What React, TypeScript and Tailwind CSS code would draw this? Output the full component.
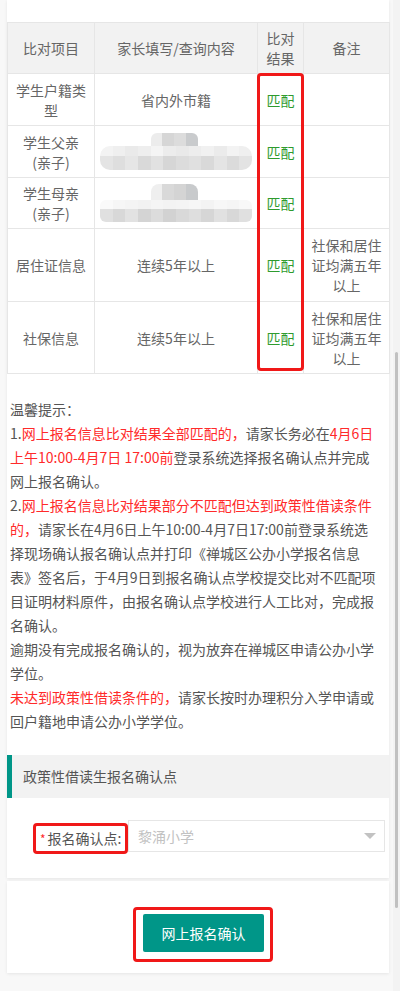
import React from "react";

const red = "text-[#ff2a2a]";

function MosaicRow({ colors, h }: { colors: string[]; h: number }) {
  return (
    <div className="flex w-full" style={{ height: h }}>
      {colors.map((c, i) => (
        <div key={i} className="flex-1" style={{ background: c }} />
      ))}
    </div>
  );
}

function BlurFather() {
  return (
    <div className="flex flex-col items-center blur-[0.7px]">
      <div className="w-[47px] overflow-hidden rounded-t-[6px] ml-[-4px]">
        <MosaicRow h={13} colors={["#ececec", "#d6d6d6", "#dcdcdc", "#c9cbcd"]} />
      </div>
      <div className="w-[152px] overflow-hidden rounded-[10px]">
        <MosaicRow h={10} colors={["#f3f3f3", "#efefef", "#eaeaea", "#eeeeee", "#f4f4f4", "#ececec", "#e9e9e9", "#ededed", "#f1f1f1", "#ebebeb", "#f3f3f3", "#efefef"]} />
        <MosaicRow h={14} colors={["#e4e4e4", "#dedede", "#e6e6e6", "#d9d9d9", "#e1e1e1", "#d6d6d6", "#dcdcdc", "#e0e0e0", "#d9d9d9", "#e4e4e4", "#dbdbdb", "#e3e3e3"]} />
      </div>
    </div>
  );
}

function BlurMother() {
  return (
    <div className="flex flex-col items-center blur-[0.7px]">
      <div className="w-[47px] overflow-hidden rounded-t-[8px] ml-[-4px]">
        <MosaicRow h={16} colors={["#efefef", "#d9d9d9", "#d4d4d4", "#c8cacc"]} />
      </div>
      <div className="w-[152px] overflow-hidden rounded-[6px]">
        <MosaicRow h={9} colors={["#fafafa", "#f6f6f6", "#f4f4f4", "#f2f2f2", "#f5f5f5", "#f3f3f3", "#f4f4f4", "#f6f6f6", "#f3f3f3", "#f7f7f7", "#f5f5f5", "#f8f8f8"]} />
        <MosaicRow h={13} colors={["#e0e0e0", "#d8d8d8", "#e2e2e2", "#d4d4d4", "#dcdcdc", "#d2d2d2", "#d9d9d9", "#dedede", "#d6d6d6", "#e1e1e1", "#d8d8d8", "#e0e0e0"]} />
      </div>
    </div>
  );
}

const td = "border border-[#e6e6e6] px-[6px] py-[5px] text-center align-middle leading-[20px]";
const match = <span className="text-[#2e9b2e]">匹配</span>;

export default function App() {
  return (
    <div className="flex h-[991px] w-[400px] overflow-hidden bg-[#f8f8f8] font-['Noto_Sans_CJK_SC','Microsoft_YaHei',sans-serif] text-[14px] text-[#666]">
      <div className="flex w-[393px] flex-col pl-[7px] pr-[4px]">
        {/* card 1 */}
        <div className="flex flex-col bg-white pt-[22px] pb-[24px] shadow-[0_1px_3px_rgba(0,0,0,0.08)]">
          <div className="relative">
            <table className="w-[382px] table-fixed border-collapse">
              <colgroup>
                <col className="w-[87px]" />
                <col className="w-[163px]" />
                <col className="w-[46px]" />
                <col className="w-[86px]" />
              </colgroup>
              <thead>
                <tr className="h-[51px] bg-[#f2f2f2]">
                  <th className={`${td} font-normal`}>比对项目</th>
                  <th className={`${td} font-normal`}>家长填写/查询内容</th>
                  <th className={`${td} font-normal`}>比对结果</th>
                  <th className={`${td} font-normal`}>备注</th>
                </tr>
              </thead>
              <tbody>
                <tr className="h-[52px]">
                  <td className={td}>学生户籍类型</td>
                  <td className={td}>省内外市籍</td>
                  <td className={td}>{match}</td>
                  <td className={td}></td>
                </tr>
                <tr className="h-[52px]">
                  <td className={td}>学生父亲(亲子)</td>
                  <td className={td}>
                    <BlurFather />
                  </td>
                  <td className={td}>{match}</td>
                  <td className={td}></td>
                </tr>
                <tr className="h-[51px]">
                  <td className={td}>学生母亲(亲子)</td>
                  <td className={td}>
                    <BlurMother />
                  </td>
                  <td className={td}>{match}</td>
                  <td className={td}></td>
                </tr>
                <tr className="h-[73px]">
                  <td className={td}>居住证信息</td>
                  <td className={td}>连续5年以上</td>
                  <td className={td}>{match}</td>
                  <td className={td}>社保和居住证均满五年以上</td>
                </tr>
                <tr className="h-[72px]">
                  <td className={td}>社保信息</td>
                  <td className={td}>连续5年以上</td>
                  <td className={td}>{match}</td>
                  <td className={td}>社保和居住证均满五年以上</td>
                </tr>
              </tbody>
            </table>
            <div className="pointer-events-none absolute left-[250px] top-[51px] h-[298px] w-[47px] rounded-[4px] border-[3px] border-[#f01818]" />
          </div>

          <div className="mt-[23px] pl-[3px] leading-[24px] text-[#555]">
            <p>温馨提示：</p>
            <p>
              1.<span className={red}>网上报名信息比对结果全部匹配的，</span>请家长务必在<span className={red}>4月6日</span>
              <br />
              <span className={red}>上午10:00-4月7日 17:00前</span>登录系统选择报名确认点并完成
              <br />
              网上报名确认。
            </p>
            <p>
              2.<span className={red}>网上报名信息比对结果部分不匹配但达到政策性借读条件</span>
              <br />
              <span className={red}>的，</span>请家长在4月6日上午10:00-4月7日17:00前登录系统选
              <br />
              择现场确认报名确认点并打印《禅城区公办小学报名信息
              <br />
              表》签名后，于4月9日到报名确认点学校提交比对不匹配项
              <br />
              目证明材料原件，由报名确认点学校进行人工比对，完成报
              <br />
              名确认。
            </p>
            <p>
              逾期没有完成报名确认的，视为放弃在禅城区申请公办小学
              <br />
              学位。
            </p>
            <p>
              <span className={red}>未达到政策性借读条件的，</span>请家长按时办理积分入学申请或
              <br />
              回户籍地申请公办小学学位。
            </p>
          </div>

          <div className="mt-[22px] flex h-[43px] items-center border-l-[5px] border-[#009688] bg-[#f2f2f2] pl-[11px] text-[#555]">
            政策性借读生报名确认点
          </div>

          <div className="mt-[22px] flex items-start pl-[26px]">
            <div className="relative mt-[3px] flex h-[31px] w-[95px] items-center pl-[7px] text-[#555]">
              <span className="mr-[2px] text-[12px] text-[#ff2a2a]">*</span>
              <span>报名确认点:</span>
              <div className="pointer-events-none absolute inset-0 rounded-[4px] border-[3px] border-[#f01818]" />
            </div>
            <div className="flex h-[32px] w-[257px] items-center justify-between border border-[#e6e6e6] bg-white pl-[9px] pr-[8px]">
              <span className="text-[#c2c2c2]">黎涌小学</span>
              <span className="h-0 w-0 border-x-[6px] border-t-[6px] border-x-transparent border-t-[#c2c2c2]" />
            </div>
          </div>
        </div>

        {/* card 2 */}
        <div className="mt-[3px] flex bg-white pb-[21px] pl-[136px] pt-[33px] shadow-[0_1px_3px_rgba(0,0,0,0.08)]">
          <div className="relative">
            <button className="flex h-[38px] w-[121px] items-center justify-center rounded-[2px] bg-[#009688] text-[14px] text-white">
              网上报名确认
            </button>
            <div className="pointer-events-none absolute -left-[10px] -top-[7px] h-[55px] w-[140px] rounded-[4px] border-[3px] border-[#f01818]" />
          </div>
        </div>
      </div>

      {/* scrollbar */}
      <div className="flex w-[7px] flex-col bg-[#f3f3f3] pl-[2px] pt-[352px]">
        <div className="h-[556px] w-[3px] rounded-full bg-[#c1c1c1]" />
      </div>
    </div>
  );
}
